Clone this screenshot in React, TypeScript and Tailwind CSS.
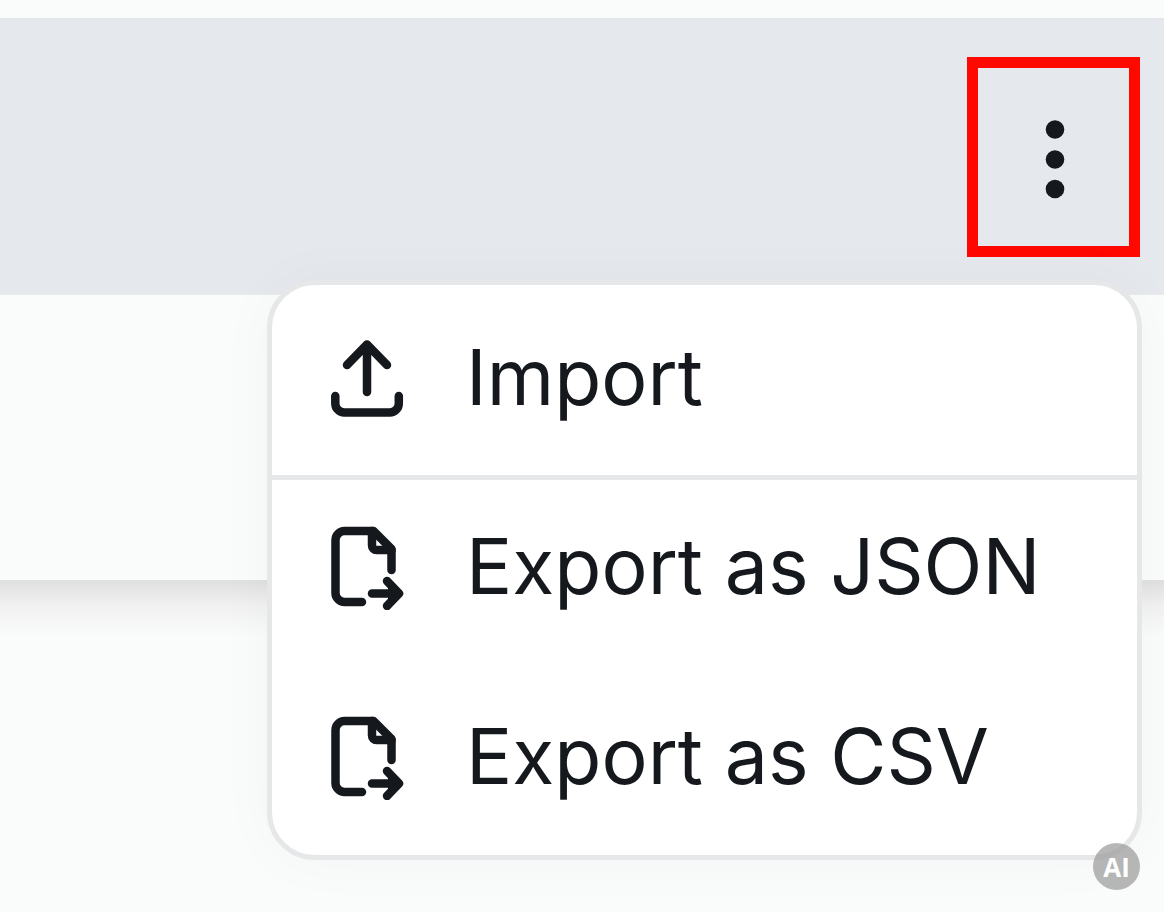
import type { ReactNode } from 'react';

function UploadIcon() {
  return (
    <svg className="h-[84px] w-20 shrink-0" viewBox="0 0 80 84" fill="none" stroke="currentColor" strokeWidth="8.500" strokeLinecap="round" strokeLinejoin="round" aria-hidden="true">
      <path d="M40 55V7.500M20 28L40 7.500l20 20.500" />
      <path d="M8.300 59v7.500a9 9 0 0 0 9 9h45.500a9 9 0 0 0 9-9v-7.500" />
    </svg>
  );
}

function FileExportIcon() {
  return (
    <svg className="h-[84px] w-20 shrink-0" viewBox="0 0 80 84" fill="none" stroke="currentColor" strokeWidth="8.500" strokeLinecap="round" strokeLinejoin="round" aria-hidden="true">
      <path d="M35 76H17.500a9 9 0 0 1-9-9V14a9 9 0 0 1 9-9h29l18 18V44" />
      <path d="M45 5v14.500a4.500 4.500 0 0 0 4.500 4.500h15" />
      <path d="M45 67.500h26M60 55l12 12.500L60 80" />
      <path d="M63 62l9 5.500L63 73z" fill="currentColor" strokeWidth="4" />
    </svg>
  );
}

function MenuItem({ icon, children }: { icon: ReactNode; children: ReactNode }) {
  return (
    <button type="button" role="menuitem" className="flex h-[176px] w-full items-center gap-[59px] pl-[55px] text-left text-[77px] leading-none whitespace-nowrap">
      {icon}
      <span className="pb-1">{children}</span>
    </button>
  );
}

export default function App() {
  return (
    <main className="relative min-h-screen overflow-hidden bg-[#fafbfb] pt-[18px] font-['Inter',sans-serif] text-[#15181c]">
      <section className="relative">
        <header className="flex h-[276px] items-start justify-end border-t-2 border-[#e4e5e8] bg-[#e5e8ec] pt-[37px] pr-6">
          <button type="button" aria-label="More options" aria-haspopup="menu" aria-expanded="true" className="flex h-[200px] w-[173px] items-center justify-center border-[11px] border-[#ff0800]">
            <svg className="h-[84px] w-6" viewBox="0 0 24 84" fill="currentColor" aria-hidden="true">
              <circle cx="13" cy="14.500" r="9.300" />
              <circle cx="13" cy="44.500" r="9.300" />
              <circle cx="13" cy="74" r="9.300" />
            </svg>
          </button>
        </header>
        <div className="h-[286px] border-t border-[#ebebeb] bg-[#fafbfb]" />
        <div className="h-14 bg-linear-to-b from-[#dfdfdf] via-[#f1f1f1] via-45% to-[#fafbfb]" />
        <div role="menu" className="absolute top-[262px] right-[22px] w-[875px] rounded-[48px] border-[5px] border-[#e6e7e8] bg-white shadow-[0_0_60px_rgba(0,0,0,0.03)]">
          <div className="border-b-[5px] border-[#e6e7e8] pt-1.5 pb-2">
            <MenuItem icon={<UploadIcon />}>Import</MenuItem>
          </div>
          <div className="flex flex-col gap-3.5 pb-[9px]">
            <MenuItem icon={<FileExportIcon />}>Export as JSON</MenuItem>
            <MenuItem icon={<FileExportIcon />}>Export as CSV</MenuItem>
          </div>
        </div>
      </section>
      <div className="absolute right-6 bottom-[22px] flex size-[47px] items-center justify-center rounded-full bg-[#999999]/70 font-['Open_Sans',sans-serif] text-[26px] leading-none font-bold text-white">
        AI
      </div>
    </main>
  );
}
